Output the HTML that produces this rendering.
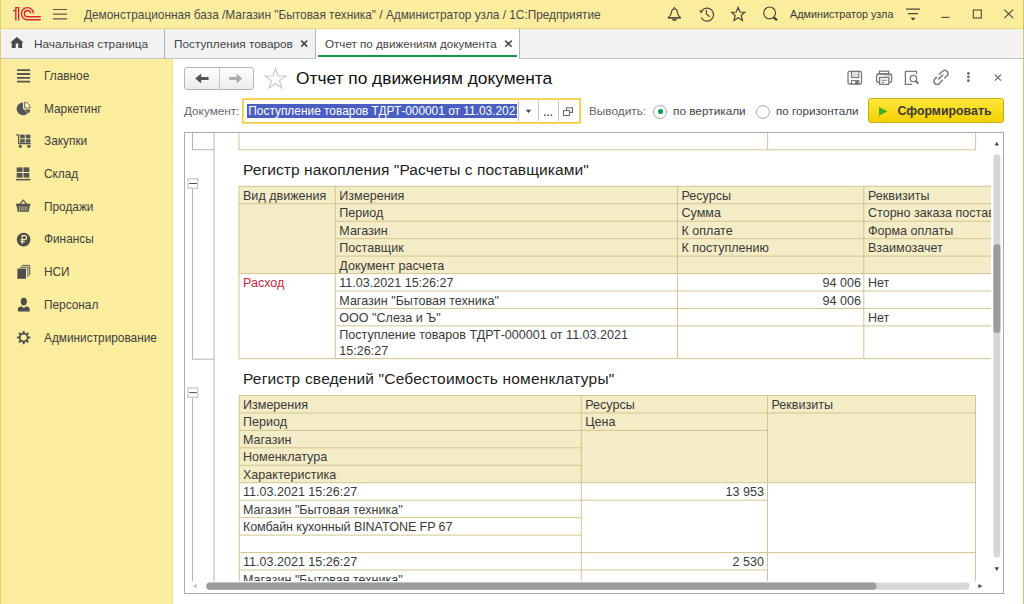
<!DOCTYPE html>
<html><head><meta charset="utf-8">
<style>
*{box-sizing:border-box;margin:0;padding:0}
html,body{width:1024px;height:604px;overflow:hidden;background:#fff;font-family:"Liberation Sans",sans-serif;font-size:12px;color:#333}
div,svg{position:absolute}
.t{white-space:nowrap;line-height:14px;height:14px}
#title{left:0;top:0;width:1024px;height:29px;background:#fbed9e;border-bottom:1px solid #e9d87c}
#tabs{left:0;top:29px;width:1024px;height:30px;background:#f2f2f2;border-bottom:1px solid #c4c4c4}
#side{left:0;top:59px;width:173px;height:545px;background:#fbed9e;border-right:1px solid #f4e691}
#side .t{left:44px;font-size:11.85px;color:#404040;margin-top:0.4px}
#main{left:173px;top:59px;width:851px;height:545px;background:#fff}
.edgeL{left:0;top:0;width:1px;height:604px;background:#e3cf6a}
.edgeR{left:1023px;top:0;width:1px;height:604px;background:#d8c460}
.c{font-size:12.55px;line-height:17.45px;height:17.45px;white-space:nowrap;color:#3a3a3a}
.h{font-size:15.5px;letter-spacing:0.09px;line-height:20px;height:20px;white-space:nowrap;color:#222}
</style></head><body>
<!-- TITLE BAR -->
<div id="title">

<svg width="1024" height="29" style="left:0;top:0" fill="none" stroke-linecap="butt">
<!-- 1C logo -->
<g stroke="#da2430" stroke-width="1.35" fill="none">
<path d="M13,10.6 L15.8,10.6 M15.8,20.4 L15.8,7.65 L18.6,7.65 L18.6,20.4"/>
<path d="M33.5,13.4 A6.05,6.05 0 1 0 27.45,19.75 L40.8,19.75"/>
<path d="M30.55,13.4 A3.1,3.1 0 1 0 27.45,16.7 L40.8,16.7"/>
</g>
<!-- hamburger -->
<g stroke="#5e5a48" stroke-width="1.2"><path d="M53,9.5H67M53,14.2H67M53,18.9H67"/></g>
<!-- bell -->
<g stroke="#4d4a3a" stroke-width="1.2" stroke-linejoin="round">
<path d="M668.4,17.5 C670.8,15.4 671.3,14.4 671.5,12.2 C671.7,9.8 672.8,8.8 674.4,8.8 C676,8.8 677.1,9.8 677.3,12.2 C677.5,14.4 678,15.4 680.4,17.5 Z"/>
<path d="M667.8,17.9H681" stroke-width="1.5"/>
<path d="M674.4,7V8.6"/>
<path d="M672.2,19.2 Q674.4,21.6 676.6,19.2" fill="#4d4a3a"/>
</g>
<!-- history -->
<g stroke="#4d4a3a" stroke-width="1.2">
<path d="M701.6,11.2 A6.5,6.5 0 1 1 701.2,17.4"/>
<path d="M706.4,10V14L709.6,16.8"/>
<path d="M699.2,10.4L703.2,10.6L701,13.6Z" fill="#4d4a3a" stroke="none"/>
</g>
<!-- star -->
<path d="M738.2,7.4 L740.1,12 L744.8,12.3 L741.2,15.5 L742.4,20.4 L738.2,17.8 L734,20.4 L735.2,15.5 L731.6,12.3 L736.3,12 Z" stroke="#4d4a3a" stroke-width="1.2" stroke-linejoin="miter"/>
<!-- search -->
<circle cx="769.6" cy="12.9" r="5.9" stroke="#4d4a3a" stroke-width="1.2"/>
<path d="M773.6,17.4L777,20.2" stroke="#3a382c" stroke-width="2.2"/>
<!-- settings -->
<g stroke="#4d4a3a" stroke-width="1.2"><path d="M906,9.2H920M908,13.6H918"/></g>
<path d="M910.6,17.8H915.4L913,20.4Z" fill="#3a382c"/>
<!-- window controls -->
<g stroke="#4d4a3a" stroke-width="1.1">
<path d="M941.6,17.4H949.6"/>
<rect x="973.3" y="10" width="8" height="8"/>
<path d="M1004.2,9.6L1013.2,18.2M1013.2,9.6L1004.2,18.2"/>
</g>
</svg>
<div class="t" style="left:84px;top:7.6px;font-size:11.85px;color:#4a4a4a">Демонстрационная база /Магазин "Бытовая техника" / Администратор узла / 1С:Предприятие</div>
<div class="t" style="left:790px;top:6.9px;font-size:10.8px;color:#3a3a3a">Администратор узла</div>
</div>
<!-- TAB BAR -->
<div id="tabs">
<div style="left:164px;top:0;width:1px;height:29px;background:#b4b4b4"></div>
<div style="left:315px;top:0;width:205px;height:30px;background:#fff;border-left:1px solid #b8b8b8;border-right:1px solid #b8b8b8"></div>
<div style="left:318px;top:26px;width:199px;height:2px;background:#0a9a4a"></div>

<svg width="1024" height="30" style="left:0;top:0" fill="none">
<path d="M16.9,8 L23.6,13.6 L22.1,13.6 L22.1,18.9 L18.3,18.9 L18.3,14.4 L15.7,14.4 L15.7,18.9 L11.75,18.9 L11.75,13.6 L10.3,13.6 Z" fill="#4a4a4a"/>
<g stroke="#444" stroke-width="1.5"><path d="M301.2,11.6L307.2,17.6M307.2,11.6L301.2,17.6"/><path d="M505.3,11.6L511.7,17.8M511.7,11.6L505.3,17.8"/></g>
</svg>
<div class="t" style="color:#444;left:34px;top:7.6px;font-size:11.8px">Начальная страница</div>
<div class="t" style="color:#444;left:174px;top:7.6px;font-size:11.8px">Поступления товаров</div>
<div class="t" style="color:#444;left:325px;top:7.6px;font-size:11.62px">Отчет по движениям документа</div>
</div>
<!-- SIDEBAR -->
<div id="side">

<svg width="173" height="545" style="left:0;top:0" fill="none"><g transform="translate(0,-59)">
<!-- list -->
<g stroke="#555" stroke-width="1.8"><path d="M17,70.2H30.2M17,74H30.2M17,77.9H30.2M17,81.7H30.2"/></g>
<!-- pie -->
<g>
<path d="M23,108.8 L23,102.4 A6.4,6.4 0 1 0 27.6,113.3 Z" fill="#555"/>
<path d="M24.2,109.6 L30.2,109.6 A6.2,6.2 0 0 1 28.5,113.6 Z" fill="#555"/>
<path d="M24.6,107.9 L24.6,102.2 A5.8,5.8 0 0 1 30.2,107.9 Z" fill="#fdf3c0" stroke="#666" stroke-width="1"/>
</g>
<!-- cart -->
<g>
<path d="M16.2,134.9 H18.6 V143.6 H30.8" stroke="#555" stroke-width="1.3"/>
<rect x="20.2" y="134.6" width="4.6" height="3.7" fill="#555"/><rect x="25.8" y="134.6" width="4.6" height="3.7" fill="#555"/>
<rect x="20.2" y="139.2" width="4.6" height="3.5" fill="#555"/><rect x="25.8" y="139.2" width="4.6" height="3.5" fill="#555"/>
<circle cx="20.3" cy="146.3" r="1.6" fill="#555"/><circle cx="28.9" cy="146.3" r="1.6" fill="#555"/>
</g>
<!-- warehouse -->
<g fill="#555">
<rect x="16.7" y="167.4" width="5.8" height="4.6"/><rect x="23.5" y="167.4" width="5.8" height="4.6"/>
<rect x="16.7" y="173" width="5.8" height="4.6"/><rect x="23.5" y="173" width="5.8" height="4.6"/>
<rect x="16" y="178.9" width="14.4" height="1.5"/>
</g>
<!-- basket -->
<g>
<path d="M19.6,204.4 L23.2,200.2 L26.8,204.4" stroke="#555" stroke-width="1.3"/>
<path d="M16,203.8 H30.4 V205.6 H29.8 L28.8,211.8 H17.6 L16.6,205.6 H16 Z" fill="#555"/>
<g stroke="#d8cc8c" stroke-width="0.8"><path d="M19.4,206.4V210.6M21.3,206.4V210.6M23.2,206.4V210.6M25.1,206.4V210.6M27,206.4V210.6"/></g>
</g>
<!-- finance -->
<g>
<circle cx="23.6" cy="239.6" r="6.8" fill="#4d4d4d"/>
<path d="M22.2,244V235.6H24.6A1.9,1.9 0 0 1 24.6,239.6H20.6M20.6,241.6H24.8" stroke="#fbed9e" stroke-width="1.1"/>
</g>
<!-- docs -->
<g>
<path d="M22.2,265.4H29.7V275.2" stroke="#555" stroke-width="1"/>
<path d="M20.2,267.2H27.9V277" stroke="#555" stroke-width="1"/>
<rect x="17.4" y="268.6" width="8.6" height="10.2" fill="#4d4d4d"/>
</g>
<!-- person -->
<g fill="#4d4d4d">
<path d="M23.8,297.8 C26,297.8 26.9,299.4 26.9,301.4 C26.9,303.6 25.6,305.6 23.8,305.6 C22,305.6 20.7,303.6 20.7,301.4 C20.7,299.4 21.6,297.8 23.8,297.8Z"/>
<path d="M17.9,311.4 V309 C17.9,307.4 19.4,306.6 21.4,306.2 L23.8,308 L26.2,306.2 C28.2,306.6 29.7,307.4 29.7,309 V311.4 Z"/>
</g>
<!-- gear -->
<g>
<circle cx="23.7" cy="337.6" r="3.9" stroke="#4d4d4d" stroke-width="1.7"/>
<g stroke="#4d4d4d" stroke-width="2">
<path d="M23.7,331V333.4M23.7,341.8V344.2M17.1,337.6H19.5M27.9,337.6H30.3M19,332.9L20.7,334.6M26.7,340.6L28.4,342.3M28.4,332.9L26.7,334.6M20.7,340.6L19,342.3"/>
</g>
</g>
</g></svg>
<div class="t" style="top:10px">Главное</div>
<div class="t" style="top:43px">Маркетинг</div>
<div class="t" style="top:75px">Закупки</div>
<div class="t" style="top:108px">Склад</div>
<div class="t" style="top:141px">Продажи</div>
<div class="t" style="top:173px">Финансы</div>
<div class="t" style="top:206px">НСИ</div>
<div class="t" style="top:239px">Персонал</div>
<div class="t" style="top:272px">Администрирование</div>
</div>
<!-- MAIN -->
<div id="main"></div>
<!-- command bar -->
<div style="left:184px;top:67px;width:70px;height:23px;border:1px solid #b4b4b4;border-radius:3px;background:linear-gradient(#ffffff,#ececec)"></div>
<div style="left:219px;top:68px;width:1px;height:21px;background:#c8c8c8"></div>
<div class="t" style="left:296px;top:67px;font-size:17.33px;line-height:22px;height:22px;color:#111">Отчет по движениям документа</div>
<!-- row 2 -->
<div class="t" style="left:184px;top:104px;font-size:11.75px;color:#666">Документ:</div>
<svg width="345" height="30" style="left:240px;top:96px"><rect x="2.85" y="3.05" width="337.3" height="23.8" fill="#fff" stroke="#f7cb3a" stroke-width="1.7"/></svg>
<div style="left:247.3px;top:104.2px;width:269.8px;height:13.4px;background:#4a5ec2;overflow:hidden"><div class="t" style="left:1px;top:-0.2px;font-size:11.9px;color:#fff">Поступление товаров ТДРТ-000001 от 11.03.2021 15:26:27</div></div>
<div style="left:518.2px;top:101px;width:1px;height:20px;background:#c0c0c0"></div>
<div style="left:538px;top:101px;width:1px;height:20px;background:#c8c8c8"></div>
<div style="left:558px;top:101px;width:1px;height:20px;background:#c8c8c8"></div>
<div class="t" style="left:589px;top:104px;font-size:11.8px;color:#666">Выводить:</div>
<div style="left:653px;top:104.5px;width:14px;height:14px;border:1px solid #a8a8a8;border-radius:7px;background:#fff"></div>
<div style="left:657.5px;top:109px;width:5px;height:5px;border-radius:3px;background:#0a9a4a"></div>
<div class="t" style="left:673px;top:104px;font-size:11.8px;color:#454545">по вертикали</div>
<div style="left:755.5px;top:104.5px;width:14px;height:14px;border:1px solid #a8a8a8;border-radius:7px;background:#fff"></div>
<div class="t" style="left:776px;top:104px;font-size:11.65px;color:#454545">по горизонтали</div>
<div style="left:868px;top:98px;width:136px;height:25px;border:1px solid #c9aa10;border-radius:3px;background:linear-gradient(#ffe93a,#f3cf00)"></div>
<div class="t" style="left:897.5px;top:103.5px;font-size:12.35px;font-weight:bold;color:#3a3a3a">Сформировать</div>

<svg width="851" height="80" style="left:173px;top:59px" fill="none"><g transform="translate(-173,-59)">
<!-- nav arrows -->
<path d="M195.2,78.5 L201.2,73.6 V77 H208.6 V80.1 H201.2 V83.4 Z" fill="#555"/>
<path d="M242.2,78.5 L236.6,73.6 V77 H229.2 V80.1 H236.6 V83.4 Z" fill="#ababab"/>
<!-- fav star -->
<path d="M275.50,68.40 L278.00,75.86 L285.87,75.93 L279.54,80.61 L281.91,88.12 L275.50,83.55 L269.09,88.12 L271.46,80.61 L265.13,75.93 L273.00,75.86Z" stroke="#c3c7cc" stroke-width="1.1" stroke-linejoin="miter"/>
<!-- save -->
<g stroke="#787878" stroke-width="1.3">
<rect x="848" y="71.4" width="13.5" height="12.6" rx="1.6"/>
<rect x="851.4" y="71.4" width="7.4" height="6.2" fill="#dedede" stroke-width="1.1"/>
<rect x="851.4" y="80.6" width="7.4" height="3.4" fill="#fff" stroke-width="1.1"/>
<rect x="855.2" y="81.2" width="3" height="2.6" fill="#666" stroke="none"/>
</g>
<!-- print -->
<g stroke="#787878" stroke-width="1.3">
<rect x="879.4" y="71.2" width="9.3" height="2.8"/>
<rect x="876.6" y="74" width="15" height="8.4" rx="2"/>
<rect x="879.6" y="77.4" width="9.2" height="7" fill="#fff"/>
<path d="M881.6,80.3H887M881.6,82.4H884.2" stroke-width="1"/>
<path d="M885.6,75.6H886.8M888.4,75.6H889.6" stroke-width="1"/>
</g>
<!-- preview -->
<g stroke="#787878" stroke-width="1.3">
<path d="M916.5,74.2V71.4H905.4V84.3H912"/>
<circle cx="913.4" cy="78.5" r="3.2"/>
<path d="M915.8,81L918.3,83.6" stroke-width="1.9" stroke="#666"/>
</g>
<!-- link -->
<g stroke="#7c7c7c" stroke-width="1.5" stroke-linecap="round">
<path d="M939.2,74.2 L942.6,71.3 A3.2,3.2 0 0 1 947.3,75.6 L944.6,78"/>
<path d="M942.4,80.2 L939.6,83.2 A3.2,3.2 0 0 1 934.6,79.2 L936.4,77.4"/>
<path d="M938.6,78.9 L942.8,75"/>
</g>
<!-- dots -->
<g fill="#666"><circle cx="968.4" cy="73.4" r="1.35"/><circle cx="968.4" cy="77" r="1.35"/><circle cx="968.4" cy="80.7" r="1.35"/></g>
<!-- close -->
<path d="M994.8,74.6L1001,80.6M1001,74.6L994.8,80.6" stroke="#666" stroke-width="1.2"/>
<!-- dropdown -->
<path d="M525.8,109.8H531.2L528.5,112.9Z" fill="#444"/>
<g fill="#444"><rect x="544.1" y="114.4" width="1.5" height="1.5"/><rect x="547.4" y="114.4" width="1.5" height="1.5"/><rect x="550.7" y="114.4" width="1.5" height="1.5"/></g>
<g stroke="#6a6a6a" stroke-width="1"><path d="M566.6,110.4V107.8H572.5V112.4H569.8" stroke-width="1.1"/><rect x="563.5" y="110.6" width="5.9" height="4.9"/></g>
<!-- play -->
<path d="M879,106.9L887.4,111.3L879,115.8Z" fill="#3fae1c"/>
</g></svg>
<!-- REPORT FRAME -->
<div id="frame" style="left:184px;top:132px;width:820px;height:462px;border:1px solid #ababab;background:#fff"></div>
<div id="rep" style="left:185px;top:133px;width:806px;height:448px;overflow:hidden">
<div style="left:-185px;top:-133px;width:1024px;height:604px">
<svg width="1024" height="604" style="left:0;top:0">
<rect x="213.3" y="133" width="1.6" height="448" fill="#d2d2d2"/>
<rect x="192.0" y="133" width="1" height="16.7" fill="#b5b5b5"/>
<rect x="192" y="149.2" width="22.4" height="1" fill="#b5b5b5"/>
<rect x="238.5" y="133" width="1" height="16.8" fill="#d3c58f"/>
<rect x="767.1" y="133" width="1" height="16.8" fill="#d3c58f"/>
<rect x="975.1" y="133" width="1" height="16.8" fill="#d3c58f"/>
<rect x="238.5" y="149.3" width="737.6" height="1" fill="#d3c58f"/>
<rect x="192.0" y="188.7" width="1" height="170.5" fill="#b5b5b5"/>
<rect x="192" y="358.7" width="22.4" height="1" fill="#b5b5b5"/>
<rect x="192.0" y="397.8" width="1" height="183.2" fill="#b5b5b5"/>
<rect x="239" y="186.3" width="761" height="87.25" fill="#f4ecc6"/>
<rect x="238.5" y="185.8" width="761.5" height="1" fill="#d3c58f"/>
<rect x="238.5" y="203.25" width="761.5" height="1" fill="#d3c58f"/>
<rect x="335.3" y="220.7" width="664.7" height="1" fill="#d3c58f"/>
<rect x="335.3" y="238.15" width="664.7" height="1" fill="#d3c58f"/>
<rect x="335.3" y="255.6" width="664.7" height="1" fill="#d3c58f"/>
<rect x="238.5" y="273.05" width="761.5" height="1" fill="#d3c58f"/>
<rect x="335.3" y="290.5" width="664.7" height="1" fill="#d3c58f"/>
<rect x="335.3" y="307.95" width="664.7" height="1" fill="#d3c58f"/>
<rect x="335.3" y="325.4" width="664.7" height="1" fill="#d3c58f"/>
<rect x="238.5" y="358.1" width="761.5" height="1" fill="#d3c58f"/>
<rect x="238.5" y="186.3" width="1" height="172.3" fill="#d3c58f"/>
<rect x="334.8" y="186.3" width="1" height="172.3" fill="#d3c58f"/>
<rect x="676.9" y="186.3" width="1" height="172.3" fill="#d3c58f"/>
<rect x="863.3" y="186.3" width="1" height="172.3" fill="#d3c58f"/>
<rect x="239.3" y="395.5" width="736.2" height="87.25" fill="#f4ecc6"/>
<rect x="238.8" y="395.0" width="737.2" height="1" fill="#d3c58f"/>
<rect x="238.8" y="412.45" width="737.2" height="1" fill="#d3c58f"/>
<rect x="238.8" y="429.9" width="528.7" height="1" fill="#d3c58f"/>
<rect x="238.8" y="447.35" width="342.5" height="1" fill="#d3c58f"/>
<rect x="238.8" y="464.8" width="342.5" height="1" fill="#d3c58f"/>
<rect x="238.8" y="482.25" width="737.2" height="1" fill="#d3c58f"/>
<rect x="238.8" y="499.7" width="528.7" height="1" fill="#d3c58f"/>
<rect x="238.8" y="517.15" width="342.5" height="1" fill="#d3c58f"/>
<rect x="238.8" y="534.6" width="342.5" height="1" fill="#d3c58f"/>
<rect x="238.8" y="552.05" width="737.2" height="1" fill="#d3c58f"/>
<rect x="238.8" y="569.5" width="528.7" height="1" fill="#d3c58f"/>
<rect x="238.8" y="395.5" width="1" height="204.5" fill="#d3c58f"/>
<rect x="580.8" y="395.5" width="1" height="204.5" fill="#d3c58f"/>
<rect x="767.0" y="395.5" width="1" height="204.5" fill="#d3c58f"/>
<rect x="975.0" y="395.5" width="1" height="204.5" fill="#d3c58f"/>
<rect x="188" y="178.9" width="9.7" height="9.3" fill="#fff" stroke="#c4c4c4" stroke-width="1.2"/><rect x="189.2" y="183" width="7.6" height="1" fill="#505050"/>
<rect x="188" y="388" width="9.7" height="9.3" fill="#fff" stroke="#c4c4c4" stroke-width="1.2"/><rect x="189.2" y="392.1" width="7.6" height="1" fill="#505050"/>
</svg>
<div class="h" style="left:243px;top:159.6px">Регистр накопления "Расчеты с поставщиками"</div>
<div class="h" style="left:243px;top:369.1px;letter-spacing:0.195px">Регистр сведений "Себестоимость номенклатуры"</div>
<div class="c" style="left:243px;top:187.8px;">Вид движения</div>
<div class="c" style="left:339.3px;top:187.8px;">Измерения</div>
<div class="c" style="left:339.3px;top:205.25px;">Период</div>
<div class="c" style="left:339.3px;top:222.7px;">Магазин</div>
<div class="c" style="left:339.3px;top:240.15px;">Поставщик</div>
<div class="c" style="left:339.3px;top:257.6px;">Документ расчета</div>
<div class="c" style="left:681.5px;top:187.8px;">Ресурсы</div>
<div class="c" style="left:681.5px;top:205.25px;">Сумма</div>
<div class="c" style="left:681.5px;top:222.7px;">К оплате</div>
<div class="c" style="left:681.5px;top:240.15px;">К поступлению</div>
<div class="c" style="left:868px;top:187.8px;">Реквизиты</div>
<div class="c" style="left:868px;top:205.25px;">Сторно заказа поставщику</div>
<div class="c" style="left:868px;top:222.7px;">Форма оплаты</div>
<div class="c" style="left:868px;top:240.15px;">Взаимозачет</div>
<div class="c" style="left:243px;top:275.05px;color:#c8283c;">Расход</div>
<div class="c" style="left:339.3px;top:275.05px;">11.03.2021 15:26:27</div>
<div class="c" style="left:339.3px;top:292.5px;">Магазин "Бытовая техника"</div>
<div class="c" style="left:339.3px;top:309.95px;">ООО "Слеза и Ъ"</div>
<div class="c" style="left:339.3px;top:328.2px;line-height:14.3px;">Поступление товаров ТДРТ-000001 от 11.03.2021</div>
<div class="c" style="left:339.3px;top:343.7px;line-height:14.3px;">15:26:27</div>
<div class="c" style="left:661px;width:200px;text-align:right;top:275.05px;">94 006</div>
<div class="c" style="left:661px;width:200px;text-align:right;top:292.5px;">94 006</div>
<div class="c" style="left:868px;top:275.05px;">Нет</div>
<div class="c" style="left:868px;top:309.95px;">Нет</div>
<div class="c" style="left:243px;top:397.0px;">Измерения</div>
<div class="c" style="left:243px;top:414.45px;">Период</div>
<div class="c" style="left:243px;top:431.9px;">Магазин</div>
<div class="c" style="left:243px;top:449.35px;">Номенклатура</div>
<div class="c" style="left:243px;top:466.8px;">Характеристика</div>
<div class="c" style="left:243px;top:484.25px;">11.03.2021 15:26:27</div>
<div class="c" style="left:243px;top:501.7px;">Магазин "Бытовая техника"</div>
<div class="c" style="left:243px;top:519.15px;letter-spacing:-0.09px;">Комбайн кухонный BINATONE FP 67</div>
<div class="c" style="left:243px;top:554.05px;">11.03.2021 15:26:27</div>
<div class="c" style="left:243px;top:571.5px;">Магазин "Бытовая техника"</div>
<div class="c" style="left:585.3px;top:397.0px;">Ресурсы</div>
<div class="c" style="left:585.3px;top:414.45px;">Цена</div>
<div class="c" style="left:771.5px;top:397.0px;">Реквизиты</div>
<div class="c" style="left:564px;width:200px;text-align:right;top:484.25px;">13 953</div>
<div class="c" style="left:564px;width:200px;text-align:right;top:554.05px;">2 530</div>
</div>
</div>

<svg width="1024" height="604" style="left:0;top:0;pointer-events:none" fill="none">
<rect x="993.4" y="154.2" width="7" height="403.3" rx="3.5" fill="#d7d7d7"/>
<rect x="993.4" y="244" width="7" height="89" rx="3.5" fill="#9c9c9c"/>
<path d="M994.6,145.6H999L996.8,141.8Z" fill="#444"/>
<path d="M994.6,567.2H999L996.8,571Z" fill="#444"/>
<rect x="206.3" y="582.6" width="763.2" height="7.2" rx="3.6" fill="#d7d7d7"/>
<rect x="206.3" y="582.6" width="670.2" height="7.2" rx="3.6" fill="#9c9c9c"/>
<path d="M196.6,583.9V588.3L193,586.1Z" fill="#bdbdbd"/>
<path d="M978.4,583.9V588.3L982.2,586.1Z" fill="#444"/>
</svg>
<div class="edgeL"></div><div class="edgeR"></div>
</body></html>
